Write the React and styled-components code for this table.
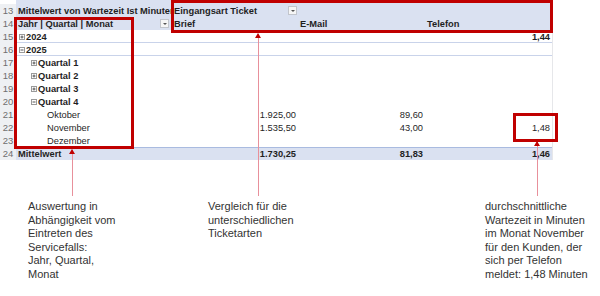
import React from "react";
import styled, { createGlobalStyle } from "styled-components";

const GlobalStyle = createGlobalStyle`
  body {
    margin: 0;
    background: #ffffff;
  }
`;

const Page = styled.div`
  position: relative;
  width: 600px;
  height: 296px;
  overflow: hidden;
  background: #ffffff;
  font-family: "Liberation Sans", Arial, sans-serif;
  color: #1f1f1f;
`;

const Sheet = styled.div`
  display: flex;
  flex-direction: column;
`;

const Row = styled.div`
  display: flex;
  height: ${(p) => p.$h || 13}px;
`;

const RowNum = styled.div`
  width: 16px;
  height: 13px;
  align-self: flex-end;
  background: #eef0f3;
  color: #6f6f6f;
  font-size: 9.5px;
  line-height: 13px;
  text-align: center;
`;

const Band = styled.div`
  width: 536px;
  display: grid;
  grid-template-columns: 155px 127px 127px 127px;
  align-items: end;
  background: ${(p) => p.$bg || "transparent"};
  box-shadow: ${(p) => p.$shadow || "none"};
`;

const Filler = styled.div`
  flex: 1;
  border-left: 1px solid #e6e7ea;
`;

const Cell = styled.div`
  display: flex;
  align-items: center;
  justify-content: ${(p) => (p.$right ? "flex-end" : "flex-start")};
  height: 13px;
  padding: 0 ${(p) => (p.$right ? 2 : 0)}px 0 ${(p) => p.$indent ?? 2}px;
  font-size: 9.3px;
  font-weight: ${(p) => (p.$bold ? 700 : 400)};
  white-space: nowrap;
  overflow: hidden;
  min-width: 0;
`;

const Grow = styled.span`
  flex: 1;
  overflow: hidden;
`;

const DropBtn = styled.span`
  display: flex;
  align-items: center;
  justify-content: center;
  width: 7px;
  height: 7px;
  margin-right: ${(p) => p.$mr || 1}px;
  border: 1px solid #c2c5cc;
  background: #f6f6f6;
  flex-shrink: 0;

  &::after {
    content: "";
    border-left: 2px solid transparent;
    border-right: 2px solid transparent;
    border-top: 2px solid #555;
  }
`;

const Toggle = styled.svg`
  width: 6px;
  height: 6px;
  margin-right: 1px;
  flex-shrink: 0;
`;

const Box = styled.div`
  position: absolute;
  left: ${(p) => p.$l}px;
  top: ${(p) => p.$t}px;
  width: ${(p) => p.$w}px;
  height: ${(p) => p.$h}px;
  border: 3px solid #c00000;
  box-sizing: border-box;
`;

const Arrow = styled.div`
  position: absolute;
  left: ${(p) => p.$x}px;
  top: ${(p) => p.$top}px;
  width: 1px;
  height: ${(p) => p.$len}px;
  background: #e8909b;

  &::before {
    content: "";
    position: absolute;
    left: -3px;
    top: -1px;
    border-left: 3.5px solid transparent;
    border-right: 3.5px solid transparent;
    border-bottom: 5px solid #c00000;
  }
`;

const Notes = styled.div`
  display: flex;
  padding: 40px 0 0 28px;
`;

const Note = styled.div`
  width: ${(p) => (p.$w ? `${p.$w}px` : "auto")};
  flex: ${(p) => (p.$w ? "none" : 1)};
  font-size: 11px;
  line-height: 13.6px;
  color: #333333;
`;

const HEAD = "#dae1f1";

const ToggleIcon = ({ open }) => (
  <Toggle viewBox="0 0 6 6">
    <rect x="0.5" y="0.5" width="5" height="5" fill="#fff" stroke="#9a9a9a" strokeWidth="1" />
    <line x1="1.5" y1="3" x2="4.5" y2="3" stroke="#555" strokeWidth="1" />
    {!open && <line x1="3" y1="1.5" x2="3" y2="4.5" stroke="#555" strokeWidth="1" />}
  </Toggle>
);

const rows = [
  { n: 15, label: "2024", level: 0, toggle: "closed", bold: true, vals: ["", "", "1,44"], line: true },
  { n: 16, label: "2025", level: 0, toggle: "open", bold: true, vals: ["", "", ""], line: true },
  { n: 17, label: "Quartal 1", level: 1, toggle: "closed", bold: true, vals: ["", "", ""] },
  { n: 18, label: "Quartal 2", level: 1, toggle: "closed", bold: true, vals: ["", "", ""] },
  { n: 19, label: "Quartal 3", level: 1, toggle: "closed", bold: true, vals: ["", "", ""] },
  { n: 20, label: "Quartal 4", level: 1, toggle: "open", bold: true, vals: ["", "", ""] },
  { n: 21, label: "Oktober", level: 2, vals: ["1.925,00", "89,60", ""] },
  { n: 22, label: "November", level: 2, vals: ["1.535,50", "43,00", "1,48"] },
  { n: 23, label: "Dezember", level: 2, vals: ["", "", ""] },
];

const indents = [3, 15, 31];

const App = () => {
  return (
    <Page>
      <GlobalStyle />
      <Sheet>
        <Row $h={17}>
          <RowNum>13</RowNum>
          <Band $bg={HEAD}>
            <Cell $bold>Mittelwert von Wartezeit Ist Minuten</Cell>
            <Cell $bold $indent={3}>
              <Grow>Eingangsart Ticket</Grow>
              <DropBtn />
            </Cell>
            <Cell />
            <Cell />
          </Band>
          <Filler />
        </Row>
        <Row>
          <RowNum>14</RowNum>
          <Band $bg={HEAD}>
            <Cell $bold>
              <Grow>Jahr | Quartal | Monat</Grow>
              <DropBtn $mr={2} />
            </Cell>
            <Cell $bold $indent={3}>Brief</Cell>
            <Cell $bold $indent={2}>E-Mail</Cell>
            <Cell $bold $indent={2}>Telefon</Cell>
          </Band>
          <Filler />
        </Row>
        {rows.map((r) => (
          <Row key={r.n}>
            <RowNum>{r.n}</RowNum>
            <Band $shadow={r.line ? "inset 0 -1px 0 #c9d3ea" : "none"}>
              <Cell $bold={r.bold} $indent={indents[r.level]}>
                {r.toggle && <ToggleIcon open={r.toggle === "open"} />}
                {r.label}
              </Cell>
              {r.vals.map((v, i) => (
                <Cell key={i} $right $bold={r.bold}>
                  {v}
                </Cell>
              ))}
            </Band>
            <Filler />
          </Row>
        ))}
        <Row>
          <RowNum>24</RowNum>
          <Band $bg={HEAD} $shadow="inset 0 1px 0 #a9bbe0">
            <Cell $bold>Mittelwert</Cell>
            <Cell $right $bold>1.730,25</Cell>
            <Cell $right $bold>81,83</Cell>
            <Cell $right $bold>1,46</Cell>
          </Band>
          <Filler />
        </Row>
      </Sheet>

      <Notes>
        <Note $w={180}>
          Auswertung in
          <br />
          Abhängigkeit vom
          <br />
          Eintreten des
          <br />
          Servicefalls:
          <br />
          Jahr, Quartal,
          <br />
          Monat
        </Note>
        <Note $w={277}>
          Vergleich für die
          <br />
          unterschiedlichen
          <br />
          Ticketarten
        </Note>
        <Note>
          durchschnittliche
          <br />
          Wartezeit in Minuten
          <br />
          im Monat November
          <br />
          für den Kunden, der
          <br />
          sich per Telefon
          <br />
          meldet: 1,48 Minuten
        </Note>
      </Notes>

      <Box $l={14} $t={17} $w={120} $h={132} />
      <Box $l={171} $t={0} $w={382} $h={33} />
      <Box $l={513} $t={113} $w={45} $h={29} />

      <Arrow $x={72} $top={150} $len={46} />
      <Arrow $x={258} $top={34} $len={162} />
      <Arrow $x={537} $top={142} $len={54} />
    </Page>
  );
};

export default App;
